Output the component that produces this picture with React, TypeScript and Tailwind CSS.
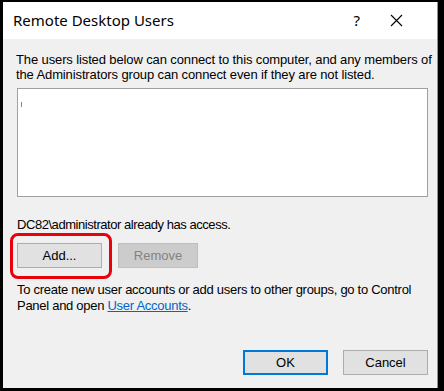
import React from "react";

function Button({
  children,
  width,
  primary,
  disabled,
}: {
  children: React.ReactNode;
  width: string;
  primary?: boolean;
  disabled?: boolean;
}) {
  return (
    <div
      className={
        "flex h-[25px] items-center justify-center text-[13px] " +
        width +
        (primary
          ? " border-2 border-[#0078d7] bg-[#e1e1e1] text-black"
          : disabled
          ? " border border-[#bfbfbf] bg-[#cccccc] text-[#838383]"
          : " border border-[#adadad] bg-[#e1e1e1] text-black")
      }
    >
      {children}
    </div>
  );
}

export default function App() {
  return (
    <div className="h-[391px] w-[444px] bg-black pl-[3px] pt-[2px] pr-[6px] pb-[3px] font-['Liberation_Sans',Arial,sans-serif]">
      <div className="flex h-full flex-col border-r border-[#5aa0dc] bg-[#f0f0f0]">
        {/* title bar */}
        <div className="flex h-[37px] shrink-0 items-center bg-white pl-[10px] pr-[34px]">
          <span className="flex-1 font-['Noto_Sans',sans-serif] text-[15px] text-black">
            Remote Desktop Users
          </span>
          <span className="mr-[30px] font-['Noto_Sans',sans-serif] text-[15px] text-black">?</span>
          <svg width="13" height="13" viewBox="0 0 13 13" className="text-black">
            <path d="M1 1L12 12M12 1L1 12" stroke="currentColor" strokeWidth="1.1" />
          </svg>
        </div>

        {/* body */}
        <div className="flex flex-1 flex-col pl-[13px] pr-[9px] pt-[13px] text-[13px] leading-[15px] text-black">
          <p className="whitespace-nowrap tracking-[-0.12px]">
            The users listed below can connect to this computer, and any members of
            <br />
            the Administrators group can connect even if they are not listed.
          </p>

          <div className="relative ml-px mt-[6px] h-[109px] border border-[#a0a0a0] bg-white">
            <span className="absolute left-[3px] top-[13px] h-[5px] w-px bg-[#6a9a6a]" />
          </div>

          <p className="ml-px mt-[20px] tracking-[-0.45px]">DC82\administrator already has access.</p>

          <div className="ml-px mt-[11px] flex gap-[16px]">
            <div className="relative">
              <Button width="w-[85px]">Add...</Button>
              <div className="pointer-events-none absolute -left-[7px] -top-[10px] h-[46px] w-[102px] rounded-[8px] border-[3px] border-[#e8000b]" />
            </div>
            <Button width="w-[80px]" disabled>
              Remove
            </Button>
          </div>

          <p className="ml-px mt-[14px] whitespace-nowrap leading-[16px] tracking-[-0.28px]">
            To create new user accounts or add users to other groups, go to Control
            <br />
            Panel and open{" "}
            <span className="text-[#0066cc] underline">User Accounts</span>.
          </p>

          <div className="mt-auto mb-[13px] flex justify-end gap-[15px]">
            <Button width="w-[85px]" primary>
              OK
            </Button>
            <Button width="w-[85px]">Cancel</Button>
          </div>
        </div>
      </div>
    </div>
  );
}
